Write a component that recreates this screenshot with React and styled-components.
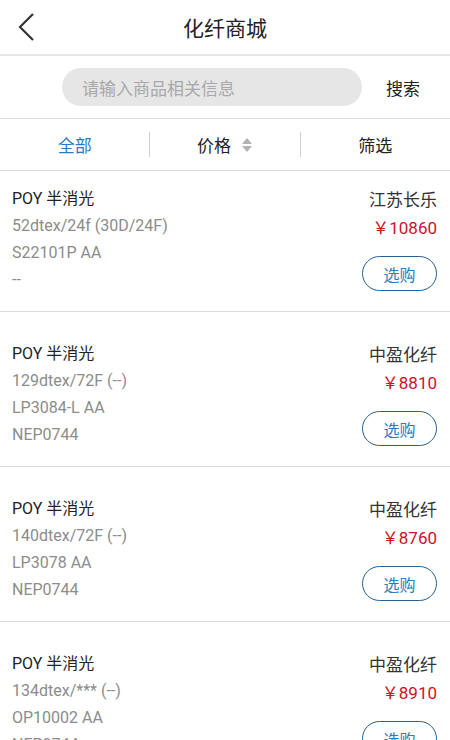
import React from 'react';
import styled, { createGlobalStyle } from 'styled-components';

const GlobalStyle = createGlobalStyle`
  body {
    margin: 0;
    background: #fff;
    font-family: Roboto, "Noto Sans CJK SC", sans-serif;
  }
`;

const Page = styled.div`
  width: 450px;
  background: #fff;
`;

const Header = styled.header`
  position: relative;
  height: 54px;
  display: flex;
  align-items: center;
  justify-content: center;
  border-bottom: 2px solid #e6e6e6;
`;

const BackButton = styled.button`
  position: absolute;
  left: 11px;
  top: 9px;
  width: 32px;
  height: 36px;
  padding: 0;
  border: none;
  background: none;
  display: flex;
  align-items: center;
  justify-content: center;
`;

const Title = styled.h1`
  margin: 0;
  font-size: 21px;
  font-weight: 400;
  color: #222;
`;

const SearchBar = styled.div`
  height: 62px;
  display: flex;
  align-items: center;
  padding-left: 62px;
  border-bottom: 1px solid #dddddd;
`;

const SearchInput = styled.div`
  width: 300px;
  height: 38px;
  border-radius: 19px;
  background: #e6e6e6;
  display: flex;
  align-items: center;
  padding-left: 20px;
  box-sizing: border-box;
  font-size: 17px;
  color: #a8a8a8;
`;

const SearchButton = styled.span`
  flex: 1;
  text-align: center;
  padding-right: 6px;
  font-size: 17px;
  color: #222;
`;

const Tabs = styled.div`
  height: 51px;
  display: flex;
  align-items: center;
  border-bottom: 1px solid #dddddd;
`;

const Tab = styled.div`
  flex: 1;
  display: flex;
  align-items: center;
  justify-content: center;
  gap: 10px;
  height: 25px;
  font-size: 17px;
  color: ${(p) => (p.$active ? '#2b7bbd' : '#222')};
  border-left: ${(p) => (p.$divider ? '1px solid #cfcfcf' : 'none')};
`;

const Item = styled.div`
  display: flex;
  justify-content: space-between;
  padding: ${(p) => (p.$first ? '14px' : '28px')} 13px 18px 12px;
  border-bottom: 1px solid #dddddd;
`;

const Info = styled.div`
  display: flex;
  flex-direction: column;
`;

const Line = styled.div`
  font-size: 16px;
  line-height: 27px;
  color: ${(p) => (p.$main ? '#222' : '#8c8c8c')};
`;

const Side = styled.div`
  display: flex;
  flex-direction: column;
  align-items: flex-end;
  padding-top: 1px;
`;

const Vendor = styled.div`
  font-size: 17px;
  line-height: 28px;
  color: #333;
`;

const Price = styled.div`
  font-size: 17px;
  line-height: 28px;
  color: #d0112b;
`;

const BuyButton = styled.button`
  margin-top: 14px;
  width: 75px;
  height: 35px;
  border: 1.5px solid #24608f;
  border-radius: 18px;
  background: #fff;
  font-family: inherit;
  font-size: 16px;
  color: #2b7bbd;
  padding: 0;
`;

const items = [
  { spec: '52dtex/24f (30D/24F)', code: 'S22101P AA', batch: '--', vendor: '江苏长乐', price: '10860' },
  { spec: '129dtex/72F (--)', code: 'LP3084-L AA', batch: 'NEP0744', vendor: '中盈化纤', price: '8810' },
  { spec: '140dtex/72F (--)', code: 'LP3078 AA', batch: 'NEP0744', vendor: '中盈化纤', price: '8760' },
  { spec: '134dtex/*** (--)', code: 'OP10002 AA', batch: 'NEP0744', vendor: '中盈化纤', price: '8910' },
];

const SortIcon = () => (
  <svg width="12" height="18" viewBox="0 0 12 18">
    <path d="M6 2 L11 8 H1 Z" fill="#b3b3b3" />
    <path d="M6 16 L11 10 H1 Z" fill="#b3b3b3" />
  </svg>
);

export default function App() {
  return (
    <Page>
      <GlobalStyle />
      <Header>
        <BackButton>
          <svg width="20" height="30" viewBox="0 0 20 30">
            <path d="M16 2 L3 15 L16 28" fill="none" stroke="#333" strokeWidth="2.2" />
          </svg>
        </BackButton>
        <Title>化纤商城</Title>
      </Header>
      <SearchBar>
        <SearchInput>请输入商品相关信息</SearchInput>
        <SearchButton>搜索</SearchButton>
      </SearchBar>
      <Tabs>
        <Tab $active>全部</Tab>
        <Tab $divider>
          价格
          <SortIcon />
        </Tab>
        <Tab $divider>筛选</Tab>
      </Tabs>
      {items.map((it, i) => (
        <Item key={i} $first={i === 0}>
          <Info>
            <Line $main>POY 半消光</Line>
            <Line>{it.spec}</Line>
            <Line>{it.code}</Line>
            <Line>{it.batch}</Line>
          </Info>
          <Side>
            <Vendor>{it.vendor}</Vendor>
            <Price>￥{it.price}</Price>
            <BuyButton>选购</BuyButton>
          </Side>
        </Item>
      ))}
    </Page>
  );
}
